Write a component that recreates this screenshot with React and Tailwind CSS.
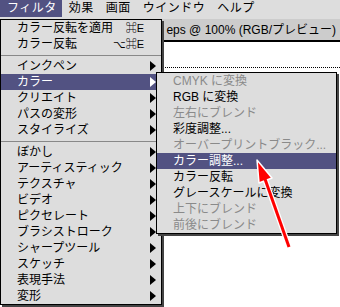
const filterItems = [
  { label: "カラー反転を適用", key: "⌘E" },
  { label: "カラー反転", key: "⌥⌘E" },
  "sep",
  { label: "インクペン", sub: true },
  { label: "カラー", sub: true, active: true },
  { label: "クリエイト", sub: true },
  { label: "パスの変形", sub: true },
  { label: "スタイライズ", sub: true },
  "sep",
  { label: "ぼかし", sub: true },
  { label: "アーティスティック", sub: true },
  { label: "テクスチャ", sub: true },
  { label: "ビデオ", sub: true },
  { label: "ピクセレート", sub: true },
  { label: "ブラシストローク", sub: true },
  { label: "シャープツール", sub: true },
  { label: "スケッチ", sub: true },
  { label: "表現手法", sub: true },
  { label: "変形", sub: true },
];

const colorItems = [
  { label: "CMYK に変換", disabled: true },
  { label: "RGB に変換" },
  { label: "左右にブレンド", disabled: true },
  { label: "彩度調整..." },
  { label: "オーバープリントブラック...", disabled: true },
  { label: "カラー調整...", active: true },
  { label: "カラー反転" },
  { label: "グレースケールに変換" },
  { label: "上下にブレンド", disabled: true },
  { label: "前後にブレンド", disabled: true },
];

const menuBar = ["フィルタ", "効果", "画面", "ウインドウ", "ヘルプ"];

function Arrow({ white }) {
  return (
    <svg width="6" height="10" viewBox="0 0 6 10" className="shrink-0">
      <polygon points="0,0 6,5 0,10" fill={white ? "#ffffff" : "#000000"} />
    </svg>
  );
}

function Separator() {
  return (
    <div className="h-[6px] pt-[3px]">
      <div className="h-px bg-[#888888]" />
    </div>
  );
}

export default function App() {
  return (
    <div className="relative w-[340px] h-[307px] overflow-hidden bg-white text-[12px] text-black font-['Liberation_Sans','Noto_Sans_CJK_JP','DejaVu_Sans',sans-serif]">
      {/* menu bar */}
      <div className="flex items-start h-[19px] bg-[#dddddd] tracking-[0.5px]">
        {menuBar.map((m, i) => (
          <div
            key={m}
            className={
              i === 0
                ? "h-[17px] pl-[7px] pr-[5px] pt-[1px] leading-[15px] bg-[#525282] text-white"
                : "h-[17px] pl-[7px] pr-[5px] pt-[1px] leading-[15px]"
            }
          >
            {m}
          </div>
        ))}
      </div>

      {/* document window */}
      <div>
        <div className="h-[23px] bg-[#cccccc] border-b-2 border-black flex items-center justify-end pr-[4px]">
          <span className="whitespace-nowrap">eps @ 100% (RGB/プレビュー)</span>
        </div>
        <div className="pt-[25px]">
          <div className="border-t border-dotted border-black" />
        </div>
      </div>

      {/* filter menu */}
      <div className="absolute left-0 top-[19px] w-[162px] bg-[#dddddd] border border-black shadow-[2px_2px_0_#444444]">
        {filterItems.map((it, i) =>
          it === "sep" ? (
            <Separator key={i} />
          ) : (
            <div
              key={i}
              className={`h-[16px] flex items-center justify-between pl-[16px] leading-[16px] ${
                it.sub ? "pr-[5px]" : "pr-[17px]"
              } ${it.active ? "bg-[#525282] text-white" : ""}`}
            >
              <span className="whitespace-nowrap">{it.label}</span>
              {it.key && <span className="whitespace-nowrap text-[11px]">{it.key}</span>}
              {it.sub && <Arrow white={it.active} />}
            </div>
          )
        )}
      </div>

      {/* color submenu */}
      <div className="absolute left-[156px] top-[72px] w-[181px] bg-[#dddddd] border border-black shadow-[2px_2px_0_#444444]">
        {colorItems.map((it) => (
          <div
            key={it.label}
            className={`h-[16px] flex items-center pl-[16px] leading-[16px] whitespace-nowrap ${
              it.active ? "bg-[#525282] text-white" : it.disabled ? "text-[#8a8a8a]" : ""
            }`}
          >
            {it.label}
          </div>
        ))}
      </div>

      {/* red pointer */}
      <svg
        className="absolute left-[250px] top-[155px]"
        width="45"
        height="100"
        viewBox="0 0 45 100"
      >
        <line x1="15.5" y1="25.5" x2="39" y2="92" stroke="#ffffff" strokeWidth="5.5" />
        <polygon points="7,5 9,28 22,23" fill="#ff0000" stroke="#ffffff" strokeWidth="1.5" strokeLinejoin="round" />
        <line x1="15" y1="24" x2="39" y2="92" stroke="#ff0000" strokeWidth="3" />
      </svg>
    </div>
  );
}
